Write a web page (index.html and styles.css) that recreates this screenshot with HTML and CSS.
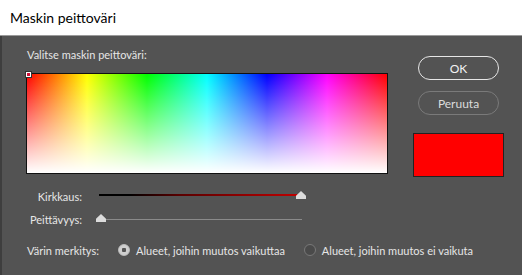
FILE: index.html
```html
<!DOCTYPE html>
<html lang="fi">
<head>
<meta charset="utf-8">
<title>Maskin peittoväri</title>
<link rel="stylesheet" href="styles.css">
</head>
<body>
<div class="window">
  <div class="titlebar">Maskin peittoväri</div>
  <div class="dialog">
    <div class="top">
      <div class="left">
        <div class="prompt">Valitse maskin peittoväri:</div>
        <div class="field">
          <div class="marker"></div>
        </div>
      </div>
      <div class="right">
        <button class="btn primary">OK</button>
        <button class="btn">Peruuta</button>
        <div class="swatch"></div>
      </div>
    </div>
    <div class="row bright">
      <div class="label">Kirkkaus:</div>
      <div class="slider">
        <div class="track dark"></div>
        <div class="thumb thumb-end"></div>
      </div>
    </div>
    <div class="row opacity">
      <div class="label">Peittävyys:</div>
      <div class="slider wide">
        <div class="track thin"></div>
        <div class="thumb thumb-start"></div>
      </div>
    </div>
    <div class="radios">
      <div class="rlabel">Värin merkitys:</div>
      <div class="radio"><span class="dot on"></span>Alueet, joihin muutos vaikuttaa</div>
      <div class="radio"><span class="dot"></span>Alueet, joihin muutos ei vaikuta</div>
    </div>
  </div>
</div>
</body>
</html>
```

FILE: styles.css
```css
html, body {
  margin: 0;
  padding: 0;
  width: 522px;
  height: 275px;
  overflow: hidden;
  background: #535353;
}
.window {
  display: flex;
  flex-direction: column;
  height: 275px;
  font-family: "Lato", "Noto Sans", sans-serif;
}
.titlebar {
  height: 36px;
  background: #ffffff;
  border-bottom: 1px solid #9a9a9a;
  box-sizing: border-box;
  padding-left: 10px;
  font-size: 14px;
  line-height: 36px;
  color: #000;
}
.dialog {
  flex: 1;
  background: #535353;
  border-left: 2px solid #3e3e3e;
  color: #e6e6e6;
  font-size: 11px;
}
.top {
  display: flex;
}
.left {
  padding-left: 24px;
  padding-top: 11px;
}
.prompt {
  line-height: 16px;
  height: 16px;
  padding-left: 1px;
}
.field {
  position: relative;
  margin-top: 10px;
  width: 360px;
  height: 99px;
  border: 1px solid #111;
  background:
    linear-gradient(to bottom, rgba(255,255,255,0) 0%, rgba(255,255,255,1) 100%),
    linear-gradient(to right, #ff0000 0%, #ffff00 16.67%, #00ff00 33.33%, #00ffff 50%, #0000ff 66.67%, #ff00ff 83.33%, #ff0000 100%);
}
.marker {
  position: absolute;
  left: -1px;
  top: -2px;
  width: 3px;
  height: 3px;
  border: 1px solid #fff;
  background: #d0103a;
  outline: 1px solid #333;
}
.right {
  display: flex;
  flex-direction: column;
  align-items: flex-start;
  margin-left: 25px;
  padding-top: 20px;
  width: 95px;
}
.btn {
  width: 81px;
  height: 24px;
  border-radius: 12px;
  background: transparent;
  border: 1px solid #7a7a7a;
  color: #dcdcdc;
  font-family: inherit;
  font-size: 12px;
  padding: 0;
  margin-bottom: 11px;
  margin-left: 5px;
}
.btn.primary {
  border-color: #e6e6e6;
  color: #f2f2f2;
}
.swatch {
  margin-top: 7px;
  width: 89px;
  height: 42px;
  background: #ff0000;
  border: 1px solid #222;
}
.row {
  display: flex;
  align-items: center;
}
.label {
  width: 80px;
  text-align: right;
}
.bright {
  margin-top: 11px;
  height: 16px;
}
.opacity {
  margin-top: 7px;
  height: 16px;
}
.slider {
  position: relative;
  margin-left: 17px;
  width: 201px;
  height: 10px;
  display: flex;
  align-items: center;
}
.slider.wide {
  margin-left: 15px;
  width: 205px;
}
.track {
  width: 100%;
}
.track.dark {
  height: 2px;
  margin-top: -3px;
  background: linear-gradient(to right, #000 0%, #000 15%, #5a0000 40%, #c00000 100%);
}
.track.thin {
  height: 1px;
  background: #8a8a8a;
}
.thumb {
  position: absolute;
  width: 10px;
  height: 8px;
  background: #dcdcdc;
  clip-path: polygon(50% 0, 100% 60%, 100% 100%, 0 100%, 0 60%);
}
.thumb-end {
  right: -6px;
  top: 0px;
}
.thumb-start {
  left: -1px;
  top: 0px;
}
.radios {
  display: flex;
  align-items: center;
  margin-top: 13px;
  padding-left: 25px;
  height: 20px;
}
.rlabel {
  width: 91px;
}
.radio {
  display: flex;
  align-items: center;
  margin-right: 19px;
}
.dot {
  width: 12px;
  height: 12px;
  border-radius: 50%;
  margin-right: 6px;
  box-sizing: border-box;
  background: #4a4a4a;
  border: 1px solid #787878;
}
.dot.on {
  background: radial-gradient(circle, #555 0 2px, #cfcfcf 2.5px);
  border: 1px solid #bdbdbd;
}
```
